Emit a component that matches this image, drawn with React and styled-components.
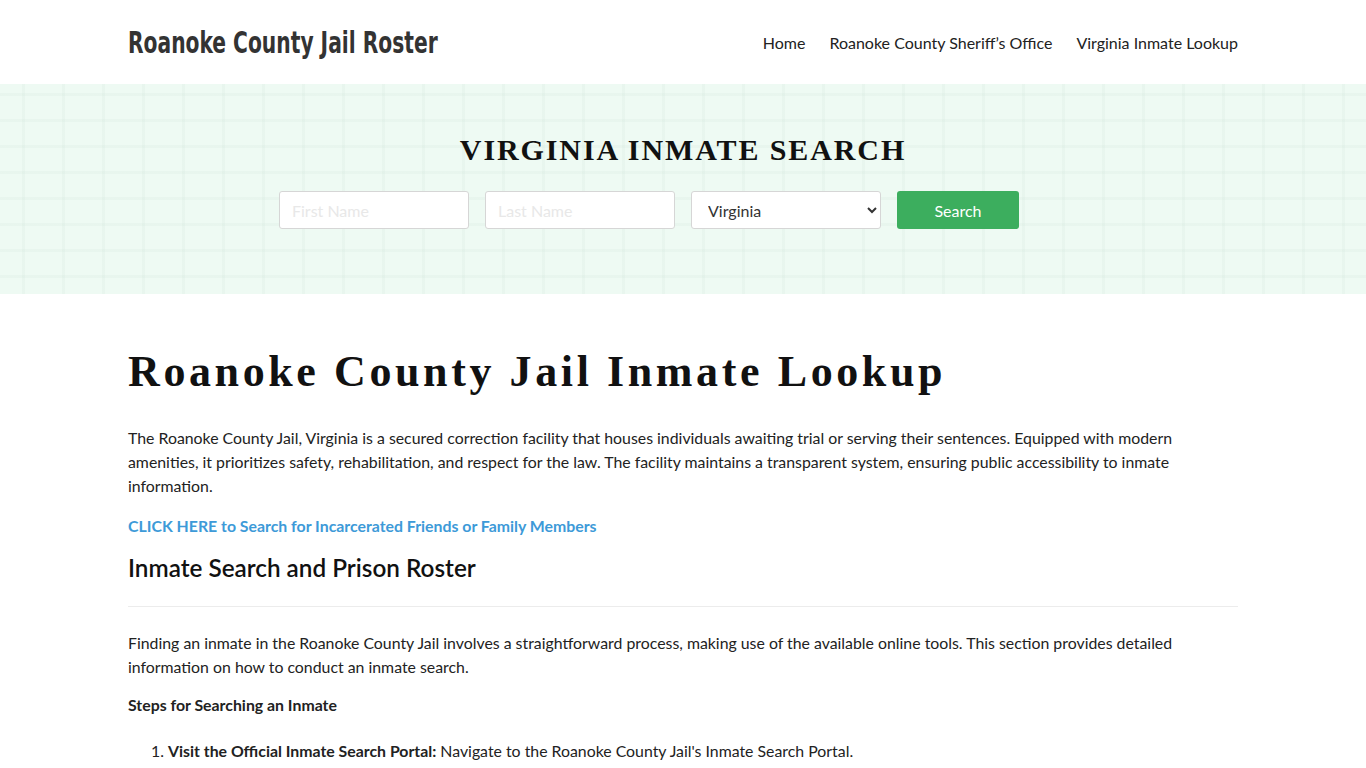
import React from "react";
import styled, { createGlobalStyle } from "styled-components";

const GlobalStyle = createGlobalStyle`
  body {
    margin: 0;
    background: #fff;
    font-family: Lato, "Noto Sans", sans-serif;
    color: #222;
  }
  * { box-sizing: border-box; }
`;

const Container = styled.div`
  width: 1110px;
  margin: 0 auto;
`;

// =========== Header =====================

const HeaderBar = styled.header`
  height: 84px;
  background: #fff;
`;

const HeaderInner = styled(Container)`
  height: 100%;
  display: flex;
  align-items: center;
  justify-content: space-between;
`;

// no narrow display face installed, so the logo text is squeezed a bit
const Brand = styled.a`
  display: inline-block;
  font-family: "DejaVu Sans Condensed", "DejaVu Sans", sans-serif;
  font-weight: 700;
  font-size: 30px;
  color: #333;
  text-decoration: none;
  transform: scaleX(0.75);
  transform-origin: left center;
  white-space: nowrap;
  width: 310px;
`;

const Nav = styled.nav`
  display: flex;
  gap: 24px;
`;

const NavLink = styled.a`
  font-size: 16px;
  color: #222;
  text-decoration: none;
`;

// =========== Hero search =====================

const Hero = styled.section`
  height: 210px;
  background-color: #eefaf3;
  background-image:
    linear-gradient(90deg, rgba(210, 230, 218, 0.22) 3px, transparent 3px),
    linear-gradient(0deg, rgba(210, 230, 218, 0.22) 3px, transparent 3px);
  background-size: 40px 26px;
  background-position: -18px -14px;
  display: flex;
  flex-direction: column;
  align-items: center;
  padding-top: 46px;
`;

const HeroTitle = styled.h2`
  margin: 0;
  font-family: "Liberation Serif", "Times New Roman", serif;
  font-weight: 700;
  font-size: 30px;
  letter-spacing: 1.9px;
  color: #111;
  line-height: 1.3;
`;

const SearchRow = styled.form`
  display: flex;
  gap: 16px;
  margin-top: 22px;
  margin-right: 68px;
`;

const Input = styled.input`
  width: 190px;
  height: 38px;
  border: 1px solid #d6d6d6;
  border-radius: 3px;
  background: #fff;
  padding: 0 12px;
  font-family: Lato, sans-serif;
  font-size: 16px;
  &::placeholder { color: #e8e8e8; }
`;

const Select = styled.select`
  width: 190px;
  height: 38px;
  border: 1px solid #d6d6d6;
  border-radius: 3px;
  background: #fff;
  padding: 0 12px;
  font-family: Lato, sans-serif;
  font-size: 16px;
  color: #333;
`;

const Button = styled.button`
  width: 122px;
  height: 38px;
  border: none;
  border-radius: 3px;
  background: #3cae5e;
  color: #fff;
  font-family: Lato, sans-serif;
  font-size: 16px;
`;

// =========== Article =====================

const Article = styled(Container)`
  padding-top: 54px;
`;

const H1 = styled.h1`
  margin: 0 0 30px;
  font-family: "Liberation Serif", "Times New Roman", serif;
  font-weight: 700;
  font-size: 44px;
  letter-spacing: 3.6px;
  line-height: 1.1;
  color: #111;
`;

const P = styled.p`
  margin: 0 0 16px;
  font-size: 15.85px;
  line-height: 24px;
  color: #222;
`;

const LinkP = styled(P)`
  margin-bottom: 13px;
`;

const BlueLink = styled.a`
  color: #3d9ad8;
  font-weight: 700;
  text-decoration: none;
`;

const H2 = styled.h2`
  margin: 0;
  font-size: 24.3px;
  font-weight: 600;
  line-height: 1.4;
  color: #111;
  padding-bottom: 21px;
  border-bottom: 1px solid #ececec;
  margin-bottom: 24px;
`;

const StepsTitle = styled(P)`
  font-weight: 700;
  margin-bottom: 22px;
`;

const StepsP = styled(P)`
  margin-bottom: 14px;
`;

const List = styled.ol`
  margin: 0;
  padding-left: 40px;
  font-size: 15.85px;
  line-height: 24px;
`;

export default function App() {
  return (
    <>
      <GlobalStyle />
      <HeaderBar>
        <HeaderInner>
          <Brand href="#">Roanoke County Jail Roster</Brand>
          <Nav>
            <NavLink href="#">Home</NavLink>
            <NavLink href="#">Roanoke County Sheriff’s Office</NavLink>
            <NavLink href="#">Virginia Inmate Lookup</NavLink>
          </Nav>
        </HeaderInner>
      </HeaderBar>
      <Hero>
        <HeroTitle>VIRGINIA INMATE SEARCH</HeroTitle>
        <SearchRow onSubmit={(e) => e.preventDefault()}>
          <Input placeholder="First Name" />
          <Input placeholder="Last Name" />
          <Select defaultValue="Virginia">
            <option>Virginia</option>
          </Select>
          <Button type="submit">Search</Button>
        </SearchRow>
      </Hero>
      <Article>
        <H1>Roanoke County Jail Inmate Lookup</H1>
        <P>
          The Roanoke County Jail, Virginia is a secured correction facility that houses individuals awaiting trial or serving their sentences. Equipped with modern amenities, it prioritizes safety, rehabilitation, and respect for the law. The facility maintains a transparent system, ensuring public accessibility to inmate information.
        </P>
        <LinkP>
          <BlueLink href="#">CLICK HERE to Search for Incarcerated Friends or Family Members</BlueLink>
        </LinkP>
        <H2>Inmate Search and Prison Roster</H2>
        <StepsP>
          Finding an inmate in the Roanoke County Jail involves a straightforward process, making use of the available online tools. This section provides detailed information on how to conduct an inmate search.
        </StepsP>
        <StepsTitle>Steps for Searching an Inmate</StepsTitle>
        <List>
          <li>
            <strong>Visit the Official Inmate Search Portal:</strong> Navigate to the Roanoke County Jail's Inmate Search Portal.
          </li>
        </List>
      </Article>
    </>
  );
}
